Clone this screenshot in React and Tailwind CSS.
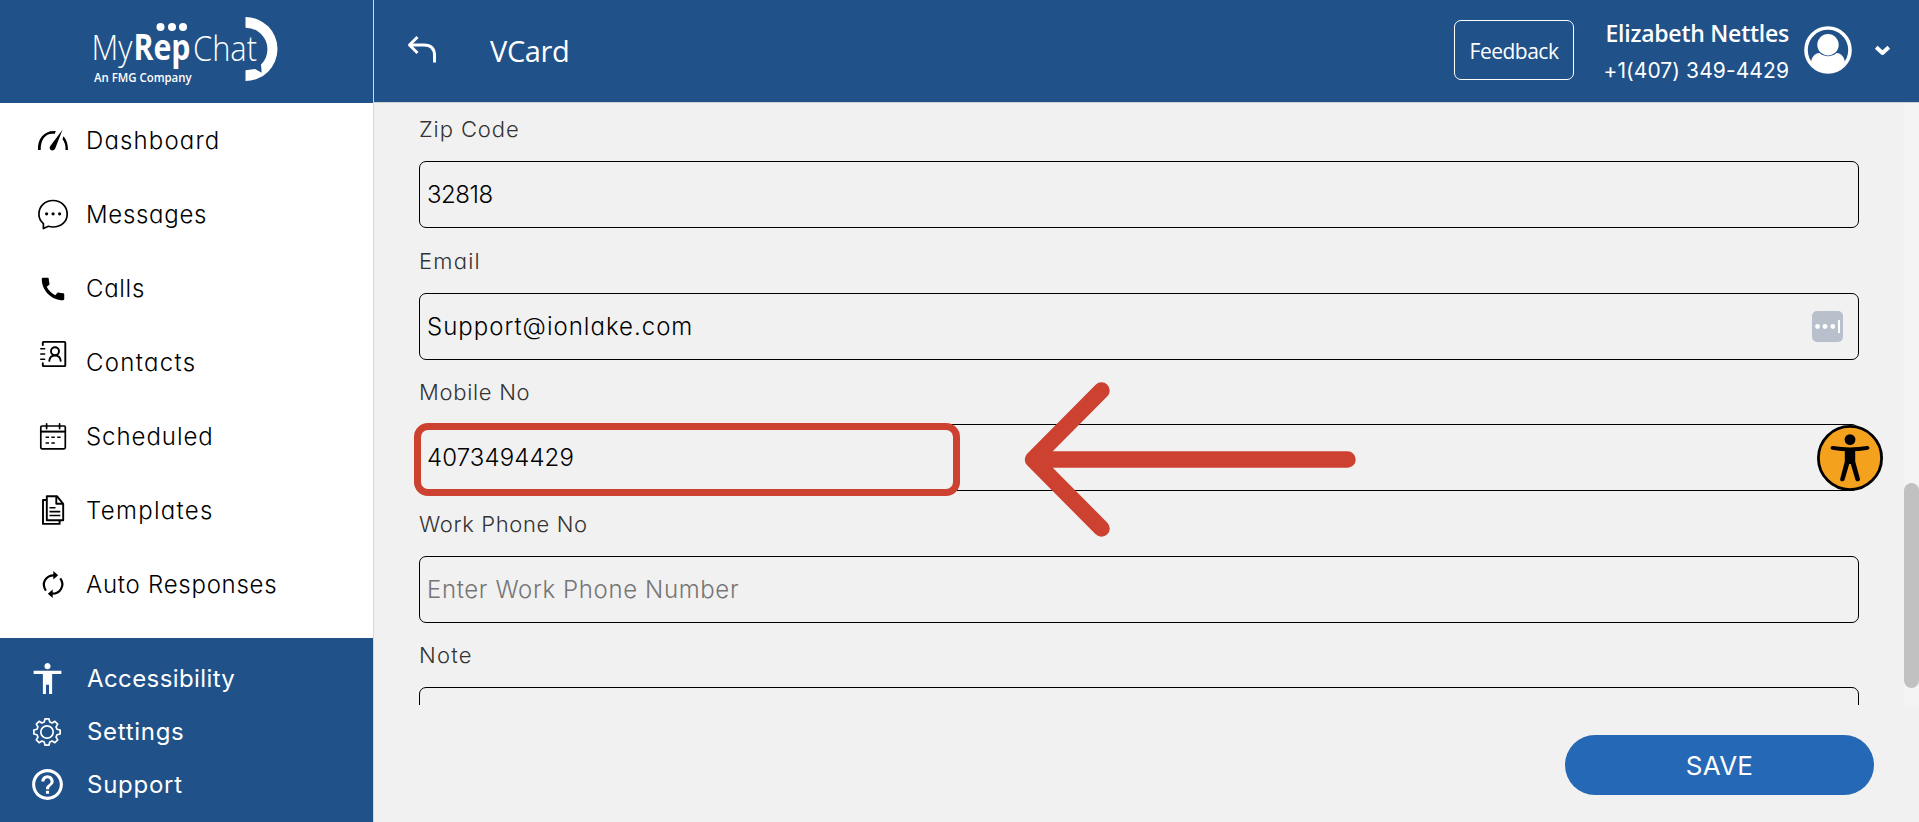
import { useState } from "react";
import { MdAccessibility, MdCall, MdHelpOutline } from "react-icons/md";

const DashboardIcon = () => (
  <svg viewBox="0 0 32 32" className="h-8 w-8 shrink-0" fill="black">
    <path d="M1 25C0.4 13.500 7 5.200 18.800 6L17.600 9C9 7.800 3.700 14 3.700 25Z" />
    <path d="M25.500 4.800L18.300 23.300C17.500 25.400 14.900 26 13.500 24.800C12.300 23.800 12.500 22.300 13.300 21.100Z" />
    <path d="M26.500 11.200C29.600 14.500 31 19 31 25H28.500C28.700 20.500 27.800 17 25.500 14.200Z" />
  </svg>
);

const MessagesIcon = () => (
  <svg viewBox="0 0 32 32" className="h-8 w-8 shrink-0" fill="none" stroke="black" strokeWidth="1.7" strokeLinejoin="round">
    <path d="M6.400 29.500V24.600C3.500 22.200 1.900 18.600 1.900 15C1.900 7.200 8 1.500 16 1.500S30.200 7.200 30.200 15S24 28 16 28C14.200 28 12.600 27.700 11.400 27.300Z" />
    <g fill="black" stroke="none">
      <circle cx="9.600" cy="14.800" r="1.600" />
      <circle cx="16.100" cy="14.800" r="1.600" />
      <circle cx="22.600" cy="14.800" r="1.600" />
    </g>
  </svg>
);

const CallsIcon = () => <MdCall className="mx-px size-[30px] shrink-0 text-black" />;

const ContactsIcon = () => (
  <svg viewBox="0 0 32 32" className="mb-[19px] h-8 w-8 shrink-0" fill="none" stroke="black" strokeWidth="1.9" strokeLinecap="round">
    <path d="M5.800 7V4.600Q5.800 3.900 6.500 3.900H27.400Q28.300 3.900 28.300 4.800V27.200Q28.300 28.100 27.400 28.100H6.500Q5.800 28.100 5.800 27.400V25.200" />
    <path d="M3.800 10.800H7.600M3.800 16H7.600M3.800 21.200H7.600" strokeWidth="1.600" />
    <circle cx="18" cy="13.200" r="4" />
    <path d="M12.300 22.800C12.700 19.500 15 17.500 18 17.500S23.300 19.500 23.700 22.800" />
  </svg>
);

const ScheduledIcon = () => (
  <svg viewBox="0 0 32 32" className="h-8 w-8 shrink-0" fill="none" stroke="black" strokeWidth="1.700">
    <rect x="3.800" y="5" width="24.500" height="22.800" rx="1.200" />
    <path d="M4 10.600H28" strokeWidth="2" />
    <path d="M9.600 2.800V7.600M22.600 2.800V7.600" strokeLinecap="round" />
    <path d="M8.600 16.300H12M14.400 16.300H17.800M20.200 16.300H23.600M8.600 22H12M14.400 22H17.800" strokeWidth="1.500" />
  </svg>
);

const TemplatesIcon = () => (
  <svg viewBox="0 0 32 32" className="h-8 w-8 shrink-0" fill="none" stroke="black" strokeWidth="1.900" strokeLinejoin="round">
    <path d="M9.800 1.200H19.900L26.200 8.800V25.300H9.800Z" />
    <path d="M19.300 1.500V8.800H26" />
    <path d="M9.500 5H6V28.900H22.600V25.600" />
    <path d="M12.500 12.800H18.500M12.500 16.600H23.300M12.500 20.500H23.300" strokeWidth="1.600" />
  </svg>
);

const AutoIcon = () => (
  <svg viewBox="0 0 32 32" className="h-8 w-8 shrink-0" fill="none" stroke="black" strokeWidth="2.200">
    <path d="M8.900 21.600C4 14.500 8.500 6.300 17 6.300" />
    <path d="M23.300 9.400C28.200 16.500 23.500 24.700 15 24.700" />
    <path d="M16.300 2L21.200 6.300L16.300 10.600Z" fill="black" stroke="none" />
    <path d="M15.700 20.400L10.800 24.700L15.700 29Z" fill="black" stroke="none" />
  </svg>
);

// eight-tooth gear outline
const gearPoints = Array.from({ length: 8 }, (_, i) => {
  const base = (i * Math.PI) / 4 - Math.PI / 2;
  return [
    [-0.27, 10.4],
    [-0.15, 13.3],
    [0.15, 13.3],
    [0.27, 10.4],
  ]
    .map(([a, r]) => `${(16 + r * Math.cos(base + a)).toFixed(2)},${(16 + r * Math.sin(base + a)).toFixed(2)}`)
    .join(" ");
}).join(" ");

const GearIcon = () => (
  <svg viewBox="0 0 32 32" className="size-8" fill="none" stroke="white" strokeWidth="1.700" strokeLinejoin="round">
    <polygon points={gearPoints} />
    <circle cx="16" cy="16" r="6.200" />
  </svg>
);

const navItems = [
  { label: "Dashboard", icon: DashboardIcon, tracking: "tracking-[1.15px]" },
  { label: "Messages", icon: MessagesIcon, tracking: "tracking-[0.7px]" },
  { label: "Calls", icon: CallsIcon, tracking: "tracking-[0.7px]" },
  { label: "Contacts", icon: ContactsIcon, tracking: "tracking-[1.3px]" },
  { label: "Scheduled", icon: ScheduledIcon, tracking: "tracking-[0.95px]" },
  { label: "Templates", icon: TemplatesIcon, tracking: "tracking-[1.3px]" },
  { label: "Auto Responses", icon: AutoIcon, tracking: "tracking-[0.75px]" },
];

const footerItems = [
  { label: "Accessibility", icon: <MdAccessibility className="size-[37px]" />, tracking: "tracking-[0.4px]" },
  { label: "Settings", icon: <GearIcon />, tracking: "tracking-[0.7px]" },
  { label: "Support", icon: <MdHelpOutline className="size-[37px]" />, tracking: "tracking-[0.75px]" },
];

const fields = [
  { name: "zip", label: "Zip Code", labelTracking: "tracking-[0.92px]", value: "32818", tracking: "tracking-[-0.5px]", gap: "mb-[65px]" },
  { name: "email", label: "Email", labelTracking: "tracking-[1.2px]", value: "Support@ionlake.com", tracking: "tracking-[1px]", gap: "mb-[64px]" },
  { name: "mobile", label: "Mobile No", labelTracking: "tracking-[0.7px]", value: "4073494429", tracking: "tracking-[0.11px]", gap: "mb-[65px]" },
  { name: "work", label: "Work Phone No", labelTracking: "tracking-[0.62px]", value: "", placeholder: "Enter Work Phone Number", tracking: "tracking-[0.63px]", gap: "mb-[64px]" },
  { name: "note", label: "Note", labelTracking: "tracking-[1.2px]", value: "", tracking: "", gap: "" },
];

const Logo = () => (
  <svg viewBox="0 0 190 80" className="h-20 w-[190px]" fill="white" fontFamily="Open Sans">
    <text x="1.500" y="49.500" fontSize="35" fontWeight="300" textLength="41" lengthAdjust="spacingAndGlyphs">My</text>
    <text x="43.500" y="49.500" fontSize="35" fontWeight="700" textLength="57" lengthAdjust="spacingAndGlyphs">Rep</text>
    <text x="103" y="50.500" fontSize="35" fontWeight="300" textLength="64" lengthAdjust="spacingAndGlyphs">Chat</text>
    <text x="4" y="71.500" fontSize="13" fontWeight="600" textLength="97.500" lengthAdjust="spacingAndGlyphs">An FMG Company</text>
    <circle cx="70.500" cy="17" r="4" />
    <circle cx="82" cy="17" r="4" />
    <circle cx="93" cy="17" r="4" />
    <path d="M155.500 7A32 32 0 0 1 155.500 71V60.300L165 59L171.700 62.700L171 54.500A21.500 21.500 0 0 0 155.500 17.700Z" />
  </svg>
);

const Sidebar = () => (
  <aside className="flex h-full w-[374px] shrink-0 flex-col border-r border-[#d8d8d8] bg-white">
    <div className="flex h-[103px] shrink-0 bg-[#205189] pt-[10px] pl-[90px]">
      <Logo />
    </div>
    <nav className="flex-1 pt-px">
      {navItems.map(({ label, icon: Icon, tracking }) => (
        <a key={label} className="flex h-[74px] items-center gap-[17px] pl-[37px] text-black">
          <Icon />
          <span className={`text-2xl font-[350] ${tracking}`}>{label}</span>
        </a>
      ))}
    </nav>
    <div className="h-[184px] shrink-0 bg-[#205189] pt-[14px]">
      {footerItems.map((item) => (
        <a key={item.label} className="flex h-[53px] items-center pl-7 text-white">
          <span className="flex w-[38px] justify-center">{item.icon}</span>
          <span className={`ml-[21px] text-2xl ${item.tracking}`}>{item.label}</span>
        </a>
      ))}
    </div>
  </aside>
);

const Header = () => (
  <header className="flex h-[103px] shrink-0 items-center border-b border-[#d0d0d0] bg-[#205189] pr-[27px] pb-[2px] font-['Open_Sans'] text-white">
    <svg viewBox="0 0 32 32" className="ml-8 h-8 w-8" fill="none" stroke="white" strokeWidth="3">
      <path d="M11.500 3L3.500 11L11.500 19" strokeLinejoin="round" />
      <path d="M3.500 11H18Q28.500 11 28.500 21.500V28.500" />
    </svg>
    <h1 className="ml-[52px] pt-[2px] text-[29px] tracking-[-0.4px]">VCard</h1>
    <button className="ml-auto h-[60px] w-[120px] rounded-[7px] border border-white pt-[3px] text-[21px] tracking-[-0.5px]">Feedback</button>
    <div className="mt-[3px] ml-[29px] w-[186px] text-right">
      <p className="text-[23px] leading-[36px] font-semibold tracking-[-0.24px]">Elizabeth Nettles</p>
      <p className="mt-[2px] font-['Inter'] text-[21px] leading-[36px] tracking-[0.09px]">+1(407) 349-4429</p>
    </div>
    <svg viewBox="0 0 48 48" className="ml-[15px] size-12">
      <circle cx="24" cy="24" r="22" fill="none" stroke="white" strokeWidth="3.600" />
      <circle cx="24" cy="18.700" r="10.700" fill="white" />
      <path d="M7 38C7 31 11 27 15.500 27C20 31.200 28 31.200 32.500 27C37 27 41 31 41 38C33 48.500 15 48.500 7 38Z" fill="white" />
    </svg>
    <svg viewBox="0 0 20 20" className="ml-5 size-5" fill="none" stroke="white" strokeWidth="4">
      <path d="M4.200 7.300L10.500 13L16.800 7.300" strokeLinejoin="round" />
    </svg>
  </header>
);

const PasswordManagerIcon = () => (
  <svg viewBox="0 0 31 31" className="absolute top-[18px] right-[16px] size-[31px]" fill="white">
    <rect width="31" height="31" rx="5" fill="#b8c0cb" />
    <circle cx="5.500" cy="15.500" r="2.400" />
    <circle cx="13" cy="15.500" r="2.400" />
    <circle cx="20.800" cy="15.500" r="2.400" />
    <rect x="26" y="9" width="2" height="13" />
  </svg>
);

const AccessibilityWidget = () => (
  <svg viewBox="0 0 66 66" className="absolute top-[425px] right-[36px] size-[66px]">
    <circle cx="33" cy="33" r="31.600" fill="#f4a21e" stroke="black" strokeWidth="2.800" />
    <circle cx="33" cy="14.600" r="5.400" />
    <path d="M15.500 22.800C27 24.800 39 24.800 50.500 22.800" fill="none" stroke="black" strokeWidth="3.800" strokeLinecap="round" />
    <path d="M27.800 24H38.200V36.500L43 54C43.400 56.500 39.500 57.300 38.500 55L33.800 39H32.200L27.500 55C26.500 57.300 22.600 56.500 23.200 54L27.800 36.500Z" />
  </svg>
);

// callout drawn over the mobile number field
const Callout = () => (
  <>
    <div className="absolute top-[423px] left-[40px] h-[73px] w-[546px] rounded-[14px] border-[7px] border-[#cd4130]" />
    <svg viewBox="0 0 336 160" className="absolute top-[379px] left-[648px] h-40 w-[336px]" fill="none" stroke="#cd4130" strokeWidth="16.500" strokeLinecap="round" strokeLinejoin="round">
      <path d="M79.500 11.500L11 80.500L79.500 149.500M11 80.500H325.500" />
    </svg>
  </>
);

const App = () => {
  const [values, setValues] = useState(Object.fromEntries(fields.map((f) => [f.name, f.value])));

  return (
    <div className="flex h-[822px] w-[1919px] overflow-hidden bg-[#f1f1f1] font-['Inter',sans-serif] [font-feature-settings:'cv11']">
      <Sidebar />
      <main className="relative flex min-w-0 flex-1 flex-col">
        <Header />
        <div className="flex h-[602px] shrink-0 overflow-hidden">
          <form className="w-[1530px] shrink-0 pt-[10px] pl-[45px]">
            {fields.map((field) => (
              <div key={field.name} className={`h-[67px] w-[1440px] ${field.gap}`}>
                <label className={`flex h-12 items-start text-[22px] leading-8 font-[350] text-[#333] ${field.labelTracking}`}>{field.label}</label>
                <div className="relative">
                  <input
                    value={values[field.name]}
                    placeholder={field.placeholder}
                    onChange={(e) => setValues({ ...values, [field.name]: e.target.value })}
                    className={`h-[67px] w-full rounded-[7px] border border-black bg-transparent pl-[7px] text-2xl font-[350] text-black outline-none placeholder:text-[#757575] ${field.tracking}`}
                  />
                  {field.name === "email" && <PasswordManagerIcon />}
                </div>
              </div>
            ))}
          </form>
          <div className="w-[15px] bg-[#f4f4f4] pt-[380px]">
            <div className="h-[205px] rounded-full bg-[#c1c1c1]" />
          </div>
        </div>
        <div className="flex justify-end pt-[30px] pr-[45px]">
          <button className="h-[60px] w-[309px] rounded-full bg-[#2568b5] text-[26px] tracking-[0.24px] text-white">SAVE</button>
        </div>
        <AccessibilityWidget />
        <Callout />
      </main>
    </div>
  );
};

export default App;
